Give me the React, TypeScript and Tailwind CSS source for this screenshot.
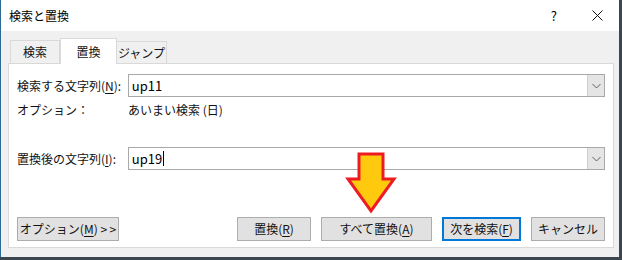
import React from 'react';

const FONT = { fontFamily: '"Noto Sans CJK JP", "Noto Sans", sans-serif' };

// mnemonic letter, underlined like a Win32 accelerator
const Key: React.FC<{ k: string }> = ({ k }) => <span className="underline underline-offset-2">{k}</span>;

const Chevron: React.FC = () => (
  <svg width="9" height="6" viewBox="0 0 9 6" className="block">
    <polyline points="0.5,1 4.5,5 8.5,1" fill="none" stroke="#606060" strokeWidth="1" />
  </svg>
);

const Combo: React.FC<{ value: string; caret?: boolean }> = ({ value, caret }) => (
  <div className="flex h-[23px] w-[478px] items-stretch border border-[#a9a9a9] bg-white">
    <div className="flex flex-1 items-center pl-[3px] text-[13px] text-black">
      {value}
      {caret && <span className="ml-px inline-block h-[15px] w-px bg-black" />}
    </div>
    <div className="flex w-[17px] items-center justify-center bg-[#e5e5e5] border-l border-[#cfcfcf]">
      <Chevron />
    </div>
  </div>
);

const Btn: React.FC<{ w: string; primary?: boolean; children: React.ReactNode }> = ({ w, primary, children }) => (
  <div
    className={`flex h-[24px] items-center justify-center text-[12px] text-[#111] ${w} ${
      primary ? 'border-2 border-[#0078d7] bg-[#e1e1e1]' : 'border border-[#adadad] bg-[#e1e1e1]'
    }`}
  >
    {children}
  </div>
);

export default function App() {
  return (
    <div className="relative h-[260px] w-[622px] overflow-hidden bg-[#3b4650]" style={FONT}>
      <div className="flex h-[257px] w-[619px] flex-col border-l border-[#2a6a95] bg-[#f0f0f0]">
        {/* title bar */}
        <div className="flex h-[31px] items-center bg-white pl-[8px] pr-[16px] text-[12px] text-black">
          <span>検索と置換</span>
          <span className="ml-auto mr-[35px] text-[13px]">?</span>
          <svg width="11" height="11" viewBox="0 0 11 11">
            <path d="M0.5 0.5 L10.5 10.5 M10.5 0.5 L0.5 10.5" stroke="#111" strokeWidth="1" />
          </svg>
        </div>

        {/* tabs */}
        <div className="ml-[8px] mt-[7px] flex h-[25px] items-end text-[12px] text-[#111]">
          <div className="ml-px flex h-[23px] w-[50px] items-center justify-center border border-b-0 border-[#d9d9d9] bg-[#f0f0f0]">検索</div>
          <div className="relative z-10 -mb-px flex h-[26px] w-[57px] items-center justify-center border border-b-0 border-[#d9d9d9] bg-white">置換</div>
          <div className="flex h-[22px] w-[50px] items-center justify-center border border-b-0 border-l-0 border-[#d9d9d9] bg-[#f0f0f0]">ジャンプ</div>
        </div>

        {/* panel */}
        <div className="ml-[7px] flex h-[185px] w-[606px] flex-col border border-[#d9d9d9] bg-white px-[8px] pt-[10px] text-[12px] text-[#111]">
          <div className="flex items-center">
            <span className="w-[111px]">検索する文字列(<Key k="N" />):</span>
            <Combo value="up11" />
          </div>
          <div className="mt-[3px] flex h-[20px] items-center">
            <span className="w-[111px]">オプション：</span>
            <span>あいまい検索 (日)</span>
          </div>
          <div className="mt-[27px] flex items-center">
            <span className="w-[111px]">置換後の文字列(<Key k="I" />):</span>
            <Combo value="up19" caret />
          </div>
          <div className="mt-[47px] flex items-center">
            <Btn w="w-[103px]">
              オプション(<Key k="M" />)&nbsp;&gt;&thinsp;&gt;
            </Btn>
            <div className="ml-[118px]">
              <Btn w="w-[74px]">
                置換(<Key k="R" />)
              </Btn>
            </div>
            <div className="ml-[10px]">
              <Btn w="w-[111px]">
                すべて置換(<Key k="A" />)
              </Btn>
            </div>
            <div className="ml-[10px]">
              <Btn w="w-[79px]" primary>
                次を検索(<Key k="F" />)
              </Btn>
            </div>
            <div className="ml-[10px]">
              <Btn w="w-[74px]">キャンセル</Btn>
            </div>
          </div>
        </div>
      </div>

      {/* annotation arrow */}
      <svg className="absolute left-[345px] top-[151px]" width="52" height="64" viewBox="345 151 52 64">
        <polygon
          points="359,154 383,154 383,179 394,179 371,211 348,179 359,179"
          fill="#ffc90e"
          stroke="#ed1c24"
          strokeWidth="3"
          strokeLinejoin="miter"
        />
      </svg>
    </div>
  );
}
